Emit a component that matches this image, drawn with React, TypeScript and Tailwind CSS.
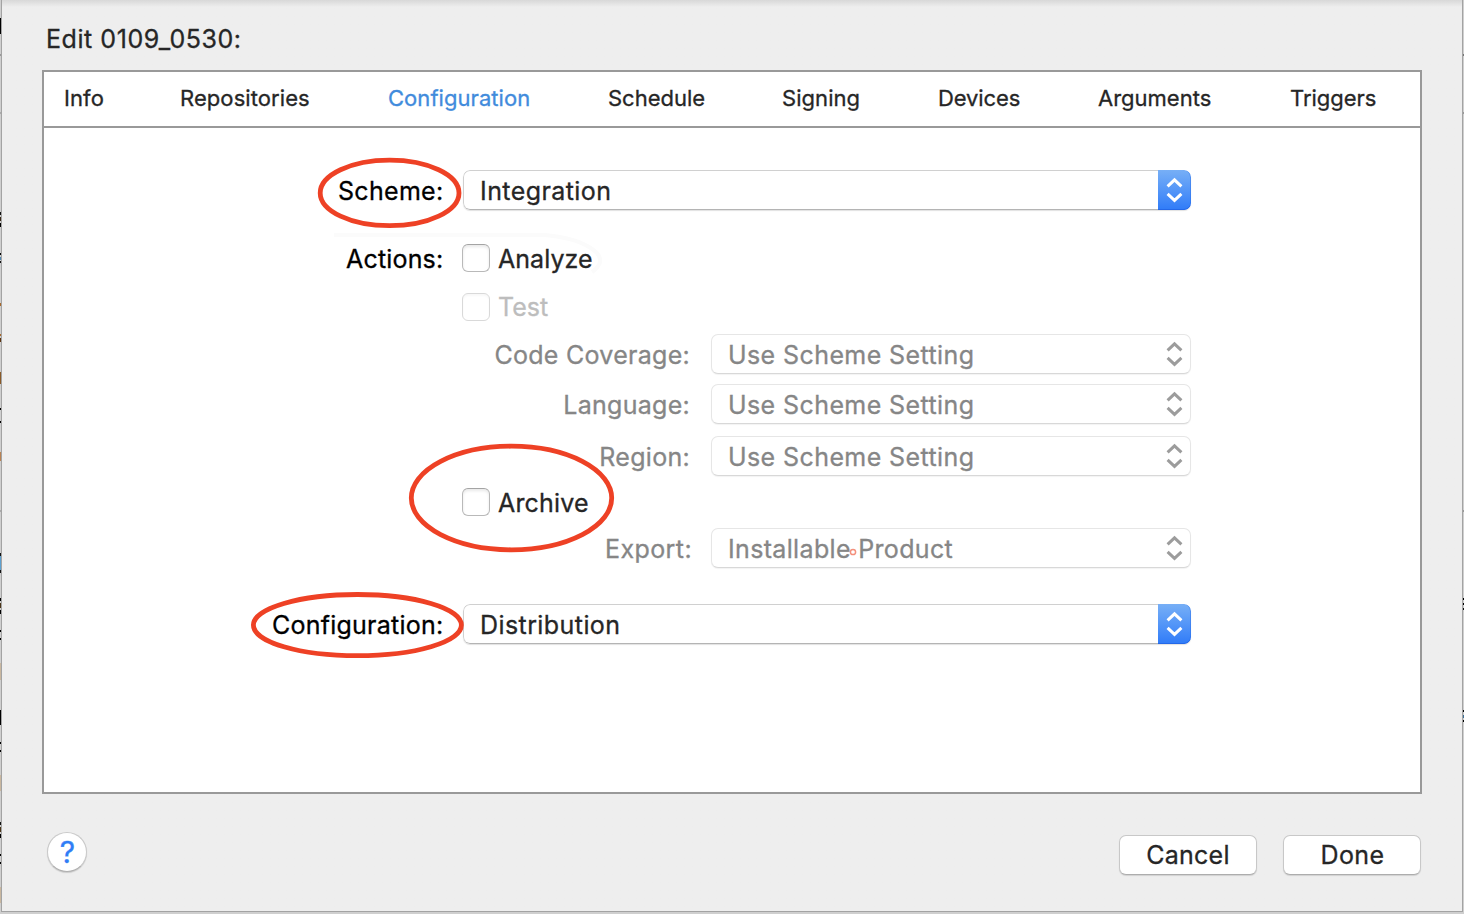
import React from "react";

type Tab = { label: string; cls: string };

const tabs: Tab[] = [
  { label: "Info", cls: "w-[116px] tracking-[0.1px] text-[#262626]" },
  { label: "Repositories", cls: "w-[208px] tracking-[0.08px] text-[#262626]" },
  { label: "Configuration", cls: "w-[220px] tracking-[0.05px] text-[#418bdc]" },
  { label: "Schedule", cls: "w-[174px] text-[#262626]" },
  { label: "Signing", cls: "w-[156px] tracking-[0.05px] text-[#262626]" },
  { label: "Devices", cls: "w-[160px] tracking-[-0.1px] text-[#262626]" },
  { label: "Arguments", cls: "w-[192px] text-[#262626]" },
  { label: "Triggers", cls: "tracking-[-0.05px] text-[#262626]" },
];

function Chevrons({ className }: { className: string }) {
  return (
    <svg width="33" height="40" viewBox="0 0 33 40" fill="none" strokeWidth="3" className={className}>
      <path d="M9.6 16.4 16.5 9.8l6.9 6.6M9.6 23.8l6.9 6.6 6.9-6.6" stroke="currentColor" />
    </svg>
  );
}

function MainSelect({ value, text }: { value: string; text: string }) {
  return (
    <div className="flex h-10 w-[728px] overflow-hidden rounded-[7px] shadow-[0_1px_1px_rgba(0,0,0,0.12)]">
      <div className="flex flex-1 items-center rounded-l-[7px] border border-r-0 border-[#d0d0d0] border-b-[#b4b4b4] bg-white pl-4 pt-[2px] text-[#262626]">
        <span className={text}>{value}</span>
      </div>
      <div className="h-10 w-[33px] rounded-r-[7px] bg-linear-to-b from-[#77aff6] to-[#2f7bf8] shadow-[inset_0_-1px_0_#2468e8,inset_-1px_0_0_rgba(36,104,232,0.4)]">
        <Chevrons className="text-white" />
      </div>
    </div>
  );
}

function DisabledRow({ label, labelCls, row, children }: { label: string; labelCls: string; row: string; children: React.ReactNode }) {
  return (
    <div className={`flex h-10 items-center text-[#868686] ${row}`}>
      <div className="flex w-[667px] justify-end pt-[2px]">
        <span className={labelCls}>{label}</span>
      </div>
      <div className="flex h-10 w-[480px] items-center justify-between rounded-[7px] border border-[#e6e6e6] border-b-[#d8d8d8] bg-white pl-4 shadow-[0_1px_1px_rgba(0,0,0,0.05)]">
        <span className="pt-[2px]">{children}</span>
        <Chevrons className="-mr-px text-[#9c9c9c]" />
      </div>
    </div>
  );
}

function CheckRow({ label, text, disabled, lead }: { label: string; text: string; disabled?: boolean; lead?: React.ReactNode }) {
  return (
    <div className="flex h-10 items-center">
      <div className="flex w-[418px] shrink-0 pt-[2px]">{lead}</div>
      <div
        className={
          disabled
            ? "size-7 rounded-[6px] border border-[#d9d9d9] bg-white shadow-[inset_0_2px_2px_rgba(0,0,0,0.03)]"
            : "size-7 rounded-[6px] border border-[#b9b9b9] border-t-[#a4a4a4] bg-white shadow-[inset_0_2px_3px_rgba(0,0,0,0.09)]"
        }
      />
      <span className={`pl-2 ${text}`}>{label}</span>
    </div>
  );
}

type Mark = [y: number, h: number, fill: string];

const leftMarks: Mark[] = [
  [18, 16, "#000"], [54, 2, "#999"], [112, 2, "#aaa"], [212, 3, "#111"], [217, 4, "#3a2a18"], [223, 4, "#000"],
  [253, 2, "#000"], [257, 3, "#4f86b0"], [261, 2, "#111"], [303, 3, "#a8692a"], [334, 2, "#a8692a"], [338, 4, "#5c3410"],
  [372, 12, "#8a5a28"], [408, 2, "#000"], [421, 2, "#000"], [452, 9, "#b98252"], [510, 2, "#aaa"],
  [553, 3, "#111"], [556, 14, "#5da0cf"], [570, 3, "#111"], [598, 3, "#000"], [603, 5, "#4b3518"], [610, 4, "#000"],
  [630, 2, "#000"], [638, 2, "#000"], [663, 17, "#c9b79f"], [710, 15, "#000"], [742, 2, "#000"], [750, 2, "#000"],
  [775, 16, "#c9b79f"], [822, 3, "#111"], [827, 5, "#4b3518"], [834, 4, "#000"], [854, 2, "#000"], [862, 2, "#000"],
  [887, 16, "#c9b79f"],
];

const rightMarks: Mark[] = [
  [54, 2, "#777"], [112, 2, "#999"], [510, 2, "#999"], [598, 2, "#000"], [603, 2, "#000"], [608, 2, "#111"],
  [710, 2, "#000"], [715, 3, "#3d6f96"], [720, 2, "#000"],
];

function EdgeStrip({ marks, className }: { marks: Mark[]; className: string }) {
  return (
    <svg width="2" height="914" viewBox="0 0 2 914" shapeRendering="crispEdges" className={className}>
      {marks.map(([y, h, fill]) => (
        <rect key={y} x="0" y={y} width="2" height={h} fill={fill} />
      ))}
    </svg>
  );
}

function Annotations() {
  return (
    <svg width="1464" height="914" viewBox="0 0 1464 914" fill="none" className="pointer-events-none absolute left-0 top-0">
      <g stroke="#ee4125" strokeWidth="4.8">
        <ellipse cx="389.6" cy="192.9" rx="69.4" ry="32.8" />
        <ellipse cx="511.5" cy="498" rx="100.2" ry="51.8" />
        <ellipse cx="357.4" cy="625.1" rx="104" ry="30.6" />
      </g>
      <circle cx="853" cy="552" r="2.6" stroke="#f4907c" strokeWidth="1.5" />
    </svg>
  );
}

export default function App() {
  return (
    <div className="relative flex h-[914px] w-[1464px] overflow-hidden bg-[#cfcfcf] font-['Inter','Liberation_Sans',sans-serif] text-[25px] leading-[30px] whitespace-nowrap [-webkit-text-stroke:0.3px_currentColor]">
      <EdgeStrip marks={leftMarks} className="absolute left-0 top-0" />
      <EdgeStrip marks={rightMarks} className="absolute right-0 top-0" />

      <div className="relative ml-px flex h-[912px] w-[1462px] flex-col border border-t-0 border-[#a3a3a3] bg-[#eeeeee] bg-linear-to-b from-[#d8d8d8] to-[#eeeeee] to-[7px] pl-10">
        <h1 className="mt-6 h-[30px] pl-1 tracking-[0.55px] text-[#262626]">Edit 0109_0530:</h1>

        <div className="mt-4 flex h-[724px] w-[1380px] flex-col border-2 border-[#999999] bg-white">
          <nav className="flex h-14 items-center border-b-2 border-[#999999] pb-0.5 pl-5 text-[22px]">
            {tabs.map((t) => (
              <span key={t.label} className={t.cls}>
                {t.label}
              </span>
            ))}
          </nav>

          <div className="relative flex flex-col pt-[42px]">
            <svg width="290" height="50" viewBox="0 0 290 50" fill="none" className="absolute left-[286px] top-[100px]">
              <path d="M4 7H215Q250 10 266 24Q276 34 262 44" stroke="#fbfbfb" strokeWidth="4" />
            </svg>

            <div className="relative flex h-10 items-center">
              <div className="flex w-[419px] pl-[294px] pt-[2px] tracking-[0.3px] text-black">Scheme:</div>
              <MainSelect value="Integration" text="tracking-[0.42px]" />
            </div>

            <div className="relative mt-7">
              <CheckRow
                label="Analyze"
                text="pt-[2px] tracking-[0.05px] text-[#262626]"
                lead={<span className="pl-[302px] tracking-[0.18px] text-black">Actions:</span>}
              />
            </div>
            <div className="mt-[9px]">
              <CheckRow label="Test" text="text-[#bdbdbd]" disabled />
            </div>

            <DisabledRow row="mt-[7px]" label="Code Coverage:" labelCls="pr-[21px] tracking-[0.28px]">
              <span className="tracking-[0.41px]">Use Scheme Setting</span>
            </DisabledRow>
            <DisabledRow row="mt-[10px]" label="Language:" labelCls="pr-[21px] tracking-[0.27px]">
              <span className="tracking-[0.41px]">Use Scheme Setting</span>
            </DisabledRow>
            <DisabledRow row="mt-3" label="Region:" labelCls="pr-[21px] tracking-[0.3px]">
              <span className="tracking-[0.41px]">Use Scheme Setting</span>
            </DisabledRow>

            <div className="mt-1.5">
              <CheckRow label="Archive" text="pt-[2px] tracking-[0.18px] text-[#262626]" />
            </div>

            <DisabledRow row="mt-1.5" label="Export:" labelCls="pr-[19px] tracking-[0.4px]">
              <span className="tracking-[0.34px]">Installable Product</span>
            </DisabledRow>

            <div className="mt-9 flex h-10 items-center">
              <div className="flex w-[419px] pl-[228px] pt-[2px] tracking-[0.24px] text-black">Configuration:</div>
              <MainSelect value="Distribution" text="tracking-[0.42px]" />
            </div>
          </div>
        </div>

        <footer className="mt-[38px] flex items-start">
          <button className="ml-[5px] flex size-10 items-center justify-center rounded-full border border-[#c9c9c9] border-b-[#b0b0b0] bg-white pl-px text-[30px] text-[#2f7df6] shadow-[0_1px_1px_rgba(0,0,0,0.15)]">
            ?
          </button>
          <button className="ml-[1032px] mt-[3px] flex h-10 w-[138px] items-center justify-center rounded-[7px] border border-[#c8c8c8] border-b-[#adadad] bg-white tracking-[0.25px] text-[#262626] shadow-[0_1px_1px_rgba(0,0,0,0.12)]">
            Cancel
          </button>
          <button className="ml-[26px] mt-[3px] flex h-10 w-[138px] items-center justify-center rounded-[7px] border border-[#c8c8c8] border-b-[#adadad] bg-white pl-px tracking-[0.4px] text-[#262626] shadow-[0_1px_1px_rgba(0,0,0,0.12)]">
            Done
          </button>
        </footer>
      </div>

      <Annotations />
    </div>
  );
}
